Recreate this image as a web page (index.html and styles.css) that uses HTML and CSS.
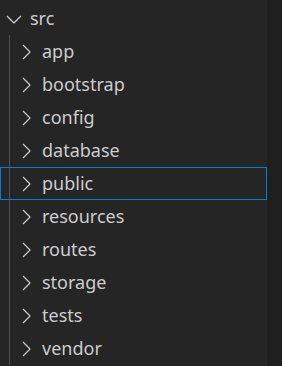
FILE: index.html
```html
<!DOCTYPE html>
<html lang="en">
<head>
<meta charset="utf-8">
<title>Explorer</title>
<link rel="stylesheet" href="styles.css">
</head>
<body>
<div class="explorer">
  <div class="tree">
    <div class="row root">
      <span class="twistie"><svg viewBox="0 0 16 16" width="24" height="24"><path d="M7.976 10.072l4.357-4.357.62.618L8.284 11h-.618L3 6.333l.619-.618 4.357 4.357z"/></svg></span>
      <span class="label">src</span>
    </div>
    <div class="children">
      <div class="row child"><span class="twistie"><svg viewBox="0 0 16 16" width="24" height="24"><path d="M10.072 8.024L5.715 3.667l.618-.62L11 7.716v.618L6.333 13l-.618-.619 4.357-4.357z"/></svg></span><span class="label">app</span></div>
      <div class="row child"><span class="twistie"><svg viewBox="0 0 16 16" width="24" height="24"><path d="M10.072 8.024L5.715 3.667l.618-.62L11 7.716v.618L6.333 13l-.618-.619 4.357-4.357z"/></svg></span><span class="label">bootstrap</span></div>
      <div class="row child"><span class="twistie"><svg viewBox="0 0 16 16" width="24" height="24"><path d="M10.072 8.024L5.715 3.667l.618-.62L11 7.716v.618L6.333 13l-.618-.619 4.357-4.357z"/></svg></span><span class="label">config</span></div>
      <div class="row child"><span class="twistie"><svg viewBox="0 0 16 16" width="24" height="24"><path d="M10.072 8.024L5.715 3.667l.618-.62L11 7.716v.618L6.333 13l-.618-.619 4.357-4.357z"/></svg></span><span class="label">database</span></div>
      <div class="row child focused"><span class="twistie"><svg viewBox="0 0 16 16" width="24" height="24"><path d="M10.072 8.024L5.715 3.667l.618-.62L11 7.716v.618L6.333 13l-.618-.619 4.357-4.357z"/></svg></span><span class="label">public</span></div>
      <div class="row child"><span class="twistie"><svg viewBox="0 0 16 16" width="24" height="24"><path d="M10.072 8.024L5.715 3.667l.618-.62L11 7.716v.618L6.333 13l-.618-.619 4.357-4.357z"/></svg></span><span class="label">resources</span></div>
      <div class="row child"><span class="twistie"><svg viewBox="0 0 16 16" width="24" height="24"><path d="M10.072 8.024L5.715 3.667l.618-.62L11 7.716v.618L6.333 13l-.618-.619 4.357-4.357z"/></svg></span><span class="label">routes</span></div>
      <div class="row child"><span class="twistie"><svg viewBox="0 0 16 16" width="24" height="24"><path d="M10.072 8.024L5.715 3.667l.618-.62L11 7.716v.618L6.333 13l-.618-.619 4.357-4.357z"/></svg></span><span class="label">storage</span></div>
      <div class="row child"><span class="twistie"><svg viewBox="0 0 16 16" width="24" height="24"><path d="M10.072 8.024L5.715 3.667l.618-.62L11 7.716v.618L6.333 13l-.618-.619 4.357-4.357z"/></svg></span><span class="label">tests</span></div>
      <div class="row child"><span class="twistie"><svg viewBox="0 0 16 16" width="24" height="24"><path d="M10.072 8.024L5.715 3.667l.618-.62L11 7.716v.618L6.333 13l-.618-.619 4.357-4.357z"/></svg></span><span class="label">vendor</span></div>
    </div>
  </div>
  <div class="side"></div>
</div>
</body>
</html>
```
FILE: styles.css
```css
html, body {
  margin: 0;
  padding: 0;
  height: 100%;
  background: #252526;
  overflow: hidden;
}
.explorer {
  display: flex;
  height: 366px;
}
.tree {
  width: 267px;
  padding-top: 2px;
  background: #252526;
  font-family: "Noto Sans", "Open Sans", sans-serif;
  font-size: 18px;
  color: #cccccc;
}
.side {
  flex: 1;
  background: #1f1f1f;
}
.row {
  display: flex;
  align-items: center;
  height: 33px;
  box-sizing: border-box;
  white-space: nowrap;
}
.root {
  padding-left: 1.5px;
}
.child {
  padding-left: 13.5px;
}
.twistie {
  display: flex;
  width: 24px;
  height: 24px;
  flex: none;
}
.twistie svg {
  fill: #c5c5c5;
  display: block;
}
.label {
  margin-left: 4.5px;
  line-height: 32px;
  padding-bottom: 1px;
}
.children {
  background: linear-gradient(#4f4f4f, #4f4f4f) 9px 0 / 1px 100% no-repeat;
}
.focused {
  width: 267px;
  border: 1px solid #007fd4;
  padding-left: 12.5px;
}
```
